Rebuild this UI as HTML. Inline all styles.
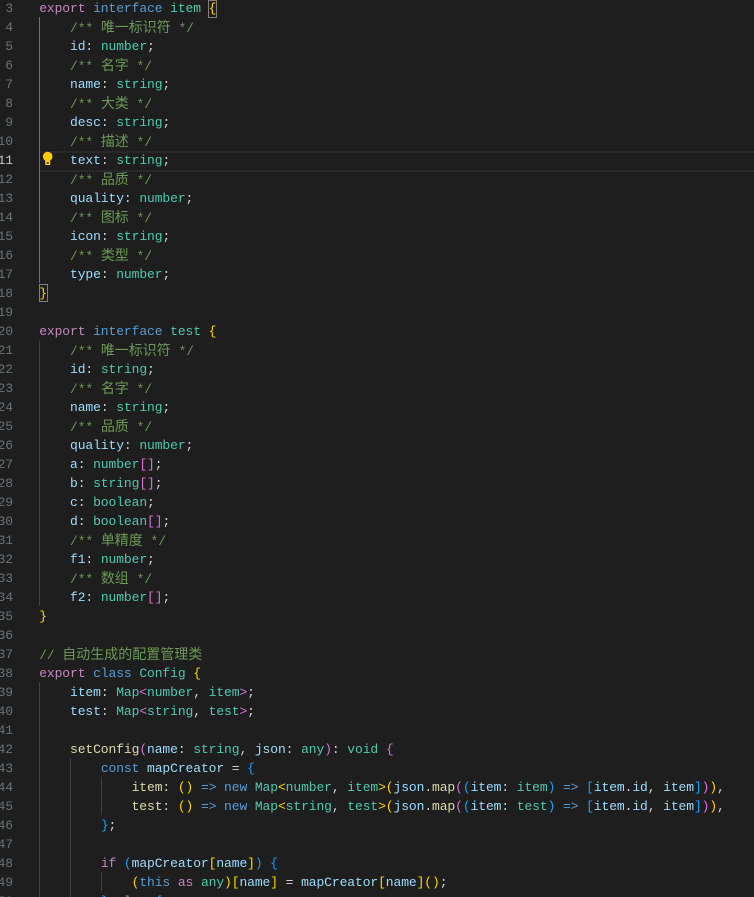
<!DOCTYPE html>
<html><head><meta charset="utf-8"><style>
html,body{margin:0;padding:0;background:#1e1e1e;width:754px;height:897px;overflow:hidden}
#e{position:relative;width:754px;height:897px;overflow:hidden;background:#1e1e1e;font-family:"Liberation Mono",monospace;font-size:13px;letter-spacing:-.1px;color:#d4d4d4}
.l,.n{position:absolute;height:19px;line-height:19px;white-space:pre}
.l{left:39.2px}
.n{right:741px;color:#66747a}
.g{position:absolute;width:1px;background:#404040}
i{font-style:normal}
.k{color:#c586c0}.b{color:#569cd6}.t{color:#4ec9b0}.v{color:#9cdcfe}.c{color:#6a9955}.f{color:#dcdcaa}.y{color:#ffd700}.p{color:#da70d6}.s{color:#179fff}
.z{font-family:"Liberation Sans","Noto Sans CJK SC",sans-serif;font-size:14px;letter-spacing:0}
</style></head><body><div id="e">
<div style="position:absolute;left:40px;right:0;top:151px;height:17px;border-top:2px solid #282828;border-bottom:2px solid #282828"></div>
<div class="g" style="left:39px;top:17px;height:266px;background:#707070"></div>
<div class="g" style="left:39px;top:340px;height:266px"></div>
<div class="g" style="left:39px;top:682px;height:215px"></div>
<div class="g" style="left:70px;top:758px;height:139px"></div>
<div class="g" style="left:101px;top:777px;height:38px"></div>
<div class="g" style="left:101px;top:872px;height:19px"></div>
<div style="position:absolute;left:208px;top:0;width:7px;height:16px;border:1px solid #808080"></div>
<div style="position:absolute;left:39px;top:284px;width:7px;height:16px;border:1px solid #808080"></div>
<svg style="position:absolute;left:42px;top:151px" width="12" height="15" viewBox="0 0 12 15"><circle cx="5.700" cy="5.500" r="4.800" fill="#ffcc00"/><rect x="3.200" y="8" width="5" height="6" fill="#ffcc00"/><rect x="4.700" y="11" width="2" height="2" fill="#5a4a10"/></svg>
<div class="n" style="top:-1px">3</div><div class="l" style="top:-1px"><i class="k">export</i> <i class="b">interface</i> <i class="t">item</i> <i class="y">{</i></div>
<div class="n" style="top:18px">4</div><div class="l c" style="top:18px">    /** <i class="z">唯一标识符</i> */</div>
<div class="n" style="top:37px">5</div><div class="l" style="top:37px">    <i class="v">id</i>: <i class="t">number</i>;</div>
<div class="n" style="top:56px">6</div><div class="l c" style="top:56px">    /** <i class="z">名字</i> */</div>
<div class="n" style="top:75px">7</div><div class="l" style="top:75px">    <i class="v">name</i>: <i class="t">string</i>;</div>
<div class="n" style="top:94px">8</div><div class="l c" style="top:94px">    /** <i class="z">大类</i> */</div>
<div class="n" style="top:113px">9</div><div class="l" style="top:113px">    <i class="v">desc</i>: <i class="t">string</i>;</div>
<div class="n" style="top:132px">10</div><div class="l c" style="top:132px">    /** <i class="z">描述</i> */</div>
<div class="n" style="top:151px;color:#c6c6c6">11</div><div class="l" style="top:151px">    <i class="v">text</i>: <i class="t">string</i>;</div>
<div class="n" style="top:170px">12</div><div class="l c" style="top:170px">    /** <i class="z">品质</i> */</div>
<div class="n" style="top:189px">13</div><div class="l" style="top:189px">    <i class="v">quality</i>: <i class="t">number</i>;</div>
<div class="n" style="top:208px">14</div><div class="l c" style="top:208px">    /** <i class="z">图标</i> */</div>
<div class="n" style="top:227px">15</div><div class="l" style="top:227px">    <i class="v">icon</i>: <i class="t">string</i>;</div>
<div class="n" style="top:246px">16</div><div class="l c" style="top:246px">    /** <i class="z">类型</i> */</div>
<div class="n" style="top:265px">17</div><div class="l" style="top:265px">    <i class="v">type</i>: <i class="t">number</i>;</div>
<div class="n" style="top:284px">18</div><div class="l" style="top:284px"><i class="y">}</i></div>
<div class="n" style="top:303px">19</div>
<div class="n" style="top:322px">20</div><div class="l" style="top:322px"><i class="k">export</i> <i class="b">interface</i> <i class="t">test</i> <i class="y">{</i></div>
<div class="n" style="top:341px">21</div><div class="l c" style="top:341px">    /** <i class="z">唯一标识符</i> */</div>
<div class="n" style="top:360px">22</div><div class="l" style="top:360px">    <i class="v">id</i>: <i class="t">string</i>;</div>
<div class="n" style="top:379px">23</div><div class="l c" style="top:379px">    /** <i class="z">名字</i> */</div>
<div class="n" style="top:398px">24</div><div class="l" style="top:398px">    <i class="v">name</i>: <i class="t">string</i>;</div>
<div class="n" style="top:417px">25</div><div class="l c" style="top:417px">    /** <i class="z">品质</i> */</div>
<div class="n" style="top:436px">26</div><div class="l" style="top:436px">    <i class="v">quality</i>: <i class="t">number</i>;</div>
<div class="n" style="top:455px">27</div><div class="l" style="top:455px">    <i class="v">a</i>: <i class="t">number</i><i class="p">[</i><i class="p">]</i>;</div>
<div class="n" style="top:474px">28</div><div class="l" style="top:474px">    <i class="v">b</i>: <i class="t">string</i><i class="p">[</i><i class="p">]</i>;</div>
<div class="n" style="top:493px">29</div><div class="l" style="top:493px">    <i class="v">c</i>: <i class="t">boolean</i>;</div>
<div class="n" style="top:512px">30</div><div class="l" style="top:512px">    <i class="v">d</i>: <i class="t">boolean</i><i class="p">[</i><i class="p">]</i>;</div>
<div class="n" style="top:531px">31</div><div class="l c" style="top:531px">    /** <i class="z">单精度</i> */</div>
<div class="n" style="top:550px">32</div><div class="l" style="top:550px">    <i class="v">f1</i>: <i class="t">number</i>;</div>
<div class="n" style="top:569px">33</div><div class="l c" style="top:569px">    /** <i class="z">数组</i> */</div>
<div class="n" style="top:588px">34</div><div class="l" style="top:588px">    <i class="v">f2</i>: <i class="t">number</i><i class="p">[</i><i class="p">]</i>;</div>
<div class="n" style="top:607px">35</div><div class="l" style="top:607px"><i class="y">}</i></div>
<div class="n" style="top:626px">36</div>
<div class="n" style="top:645px">37</div><div class="l c" style="top:645px">// <i class="z">自动生成的配置管理类</i></div>
<div class="n" style="top:664px">38</div><div class="l" style="top:664px"><i class="k">export</i> <i class="b">class</i> <i class="t">Config</i> <i class="y">{</i></div>
<div class="n" style="top:683px">39</div><div class="l" style="top:683px">    <i class="v">item</i>: <i class="t">Map</i><i class="p">&lt;</i><i class="t">number</i>, <i class="t">item</i><i class="p">&gt;</i>;</div>
<div class="n" style="top:702px">40</div><div class="l" style="top:702px">    <i class="v">test</i>: <i class="t">Map</i><i class="p">&lt;</i><i class="t">string</i>, <i class="t">test</i><i class="p">&gt;</i>;</div>
<div class="n" style="top:721px">41</div>
<div class="n" style="top:740px">42</div><div class="l" style="top:740px">    <i class="f">setConfig</i><i class="p">(</i><i class="v">name</i>: <i class="t">string</i>, <i class="v">json</i>: <i class="t">any</i><i class="p">)</i>: <i class="t">void</i> <i class="p">{</i></div>
<div class="n" style="top:759px">43</div><div class="l" style="top:759px">        <i class="b">const</i> <i class="v">mapCreator</i> = <i class="s">{</i></div>
<div class="n" style="top:778px">44</div><div class="l" style="top:778px">            <i class="f">item</i>: <i class="y">()</i> <i class="b">=&gt;</i> <i class="b">new</i> <i class="t">Map</i><i class="y">&lt;</i><i class="t">number</i>, <i class="t">item</i><i class="y">&gt;(</i><i class="v">json</i>.<i class="f">map</i><i class="p">(</i><i class="s">(</i><i class="v">item</i>: <i class="t">item</i><i class="s">)</i> <i class="b">=&gt;</i> <i class="s">[</i><i class="v">item</i>.<i class="v">id</i>, <i class="v">item</i><i class="s">]</i><i class="p">)</i><i class="y">)</i>,</div>
<div class="n" style="top:797px">45</div><div class="l" style="top:797px">            <i class="f">test</i>: <i class="y">()</i> <i class="b">=&gt;</i> <i class="b">new</i> <i class="t">Map</i><i class="y">&lt;</i><i class="t">string</i>, <i class="t">test</i><i class="y">&gt;(</i><i class="v">json</i>.<i class="f">map</i><i class="p">(</i><i class="s">(</i><i class="v">item</i>: <i class="t">test</i><i class="s">)</i> <i class="b">=&gt;</i> <i class="s">[</i><i class="v">item</i>.<i class="v">id</i>, <i class="v">item</i><i class="s">]</i><i class="p">)</i><i class="y">)</i>,</div>
<div class="n" style="top:816px">46</div><div class="l" style="top:816px">        <i class="s">}</i>;</div>
<div class="n" style="top:835px">47</div>
<div class="n" style="top:854px">48</div><div class="l" style="top:854px">        <i class="k">if</i> <i class="s">(</i><i class="v">mapCreator</i><i class="y">[</i><i class="v">name</i><i class="y">]</i><i class="s">)</i> <i class="s">{</i></div>
<div class="n" style="top:873px">49</div><div class="l" style="top:873px">            <i class="y">(</i><i class="b">this</i> <i class="k">as</i> <i class="t">any</i><i class="y">)[</i><i class="v">name</i><i class="y">]</i> = <i class="v">mapCreator</i><i class="y">[</i><i class="v">name</i><i class="y">]()</i>;</div>
<div class="n" style="top:892px">50</div><div class="l" style="top:892px">        <i class="s">}</i> <i class="k">else</i> <i class="s">{</i></div>
</div></body></html>
